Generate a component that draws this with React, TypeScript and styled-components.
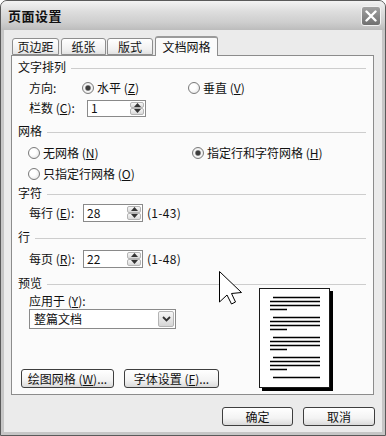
import React from 'react';
import styled, { createGlobalStyle } from 'styled-components';

const GlobalStyle = createGlobalStyle`
  html, body {
    margin: 0;
    padding: 0;
    background: #ffffff;
  }
  body {
    font-family: "Noto Sans CJK SC", "Liberation Sans", sans-serif;
    font-size: 12px;
    color: #111;
  }
`;

const Window = styled.div`
  position: relative;
  width: 386px;
  height: 436px;
  box-sizing: border-box;
  border: 1px solid #5a5a5a;
  border-radius: 7px 7px 0 0;
  display: flex;
  flex-direction: column;
  overflow: hidden;
  background: #c6c6c6;
`;

const TitleBar = styled.div`
  height: 29px;
  flex: none;
  display: flex;
  align-items: center;
  justify-content: space-between;
  padding: 0 4px 0 7px;
  background: linear-gradient(#f3f3f3 0%, #dedede 35%, #cdcdcd 75%, #bcbcbc 100%);
`;

const Title = styled.div`
  font-size: 13px;
  font-weight: 700;
  color: #111;
  letter-spacing: 0.5px;
`;

const CloseButton = styled.div`
  width: 20px;
  height: 20px;
  box-sizing: border-box;
  border: 1px solid #f2f2f2;
  border-radius: 3px;
  background: linear-gradient(#a2a2a2, #707070);
  display: flex;
  align-items: center;
  justify-content: center;
`;

const Frame = styled.div`
  flex: 1;
  display: flex;
  padding: 0 3px 3px;
`;

const Body = styled.div`
  flex: 1;
  display: flex;
  flex-direction: column;
  background: #ebebeb;
  padding: 6px 8px 0 7px;
`;

const TabRow = styled.div`
  height: 19px;
  display: flex;
  align-items: flex-end;
  padding-left: 1px;
`;

const Tab = styled.div<{ $w: number; $ml: number; $active?: boolean }>`
  position: relative;
  z-index: ${(p) => (p.$active ? 2 : 1)};
  box-sizing: border-box;
  width: ${(p) => p.$w}px;
  height: ${(p) => (p.$active ? 20 : 17)}px;
  margin-left: ${(p) => p.$ml}px;
  margin-bottom: ${(p) => (p.$active ? -1 : 0)}px;
  border: 1px solid #8e8e8e;
  border-bottom: ${(p) => (p.$active ? 'none' : '1px solid #8e8e8e')};
  border-top: ${(p) => (p.$active ? '2px solid #9a9a9a' : '1px solid #8e8e8e')};
  border-radius: 3px 3px 0 0;
  background: ${(p) => (p.$active ? '#fbfbfb' : 'linear-gradient(#ffffff, #f0f0f0 70%, #e2e2e2)')};
  display: flex;
  align-items: center;
  justify-content: center;
  font-size: 12px;
  line-height: 1;
`;

const Panel = styled.div`
  position: relative;
  height: 340px;
  box-sizing: border-box;
  border: 1px solid #8c8c8c;
  background: #fbfbfb;
  padding: 0 7px 0 6px;
  display: flex;
  flex-direction: column;
`;

const SectionHeader = styled.div<{ $mt: number; $h: number }>`
  display: flex;
  align-items: center;
  height: ${(p) => p.$h}px;
  margin-top: ${(p) => p.$mt}px;
  line-height: 1;
`;

const SectionRule = styled.div`
  flex: 1;
  height: 1px;
  margin: 2px 0 0 5px;
  background: #cdcdcd;
`;

const Row = styled.div<{ $mt: number; $h: number; $indent: number }>`
  display: flex;
  align-items: center;
  height: ${(p) => p.$h}px;
  margin-top: ${(p) => p.$mt}px;
  padding-left: ${(p) => p.$indent}px;
  line-height: 1;
`;

const FieldLabel = styled.div<{ $w: number }>`
  width: ${(p) => p.$w}px;
  flex: none;
  white-space: nowrap;
`;

const Key = styled.span`
  text-decoration: underline;
`;

const RadioOption = styled.div<{ $w?: number }>`
  display: flex;
  align-items: center;
  gap: 3px;
  width: ${(p) => (p.$w ? `${p.$w}px` : 'auto')};
  flex: none;
  white-space: nowrap;
`;

const RadioCircle = styled.span<{ $checked?: boolean }>`
  width: 12px;
  height: 12px;
  box-sizing: border-box;
  border-radius: 50%;
  border: 1px solid #7a7a7a;
  background: ${(p) =>
    p.$checked
      ? 'radial-gradient(circle, #3c3c3c 0 2px, #8e8e8e 2.6px, #f6f6f6 3.4px, #dedede 100%)'
      : 'radial-gradient(circle at 40% 40%, #ffffff 0 35%, #dcdcdc 100%)'};
  flex: none;
`;

const TextBox = styled.div<{ $w: number; $h: number }>`
  width: ${(p) => p.$w}px;
  height: ${(p) => p.$h}px;
  box-sizing: border-box;
  border: 1px solid #8a8a8a;
  background: #ffffff;
  display: flex;
  align-items: center;
  padding-left: 3px;
  flex: none;
`;

const BoxValue = styled.span`
  flex: 1;
  font-size: 12px;
`;

const SpinButtons = styled.div`
  width: 14px;
  height: calc(100% - 2px);
  margin-right: 1px;
  display: flex;
  flex-direction: column;
`;

const SpinButton = styled.div`
  flex: 1;
  box-sizing: border-box;
  border: 1px solid #b4b4b4;
  border-radius: 2px;
  background: linear-gradient(#f7f7f7, #d9d9d9);
  display: flex;
  align-items: center;
  justify-content: center;
`;

const RangeText = styled.span`
  margin-left: 4px;
  white-space: nowrap;
  letter-spacing: 0.3px;
`;

const PreviewRow = styled.div`
  display: flex;
  align-items: flex-start;
`;

const LeftCol = styled.div`
  width: 241px;
  flex: none;
  display: flex;
  flex-direction: column;
`;

const ApplyLabel = styled.div`
  height: 14px;
  margin-top: 4px;
  padding-left: 11px;
  display: flex;
  align-items: center;
  line-height: 1;
`;

const SelectBox = styled.div`
  width: 147px;
  height: 20px;
  margin: 1px 0 0 11px;
  box-sizing: border-box;
  border: 1px solid #8a8a8a;
  background: #ffffff;
  display: flex;
  align-items: center;
`;

const SelectText = styled.span`
  flex: 1;
  padding-left: 4px;
  font-size: 12px;
  line-height: 1;
`;

const SelectArrow = styled.div`
  width: 16px;
  height: 16px;
  margin-right: 1px;
  box-sizing: border-box;
  border: 1px solid #b4b4b4;
  border-radius: 2px;
  background: linear-gradient(#f7f7f7, #d6d6d6);
  display: flex;
  align-items: center;
  justify-content: center;
`;

const ButtonRow = styled.div<{ $mt: number; $ml: number }>`
  display: flex;
  gap: 10px;
  margin-top: ${(p) => p.$mt}px;
  margin-left: ${(p) => p.$ml}px;
`;

const PushButton = styled.div<{ $w: number }>`
  width: ${(p) => p.$w}px;
  height: 19px;
  box-sizing: border-box;
  border: 1px solid #3e3e3e;
  border-radius: 3px;
  background: linear-gradient(#ffffff, #f3f3f3 60%, #dadada);
  display: flex;
  align-items: center;
  justify-content: center;
  font-size: 12px;
  line-height: 1;
  white-space: nowrap;
`;

const PageBox = styled.div`
  margin-top: -2px;
  flex: none;
`;

const Cursor = styled.svg`
  position: absolute;
  left: 207px;
  top: 215px;
`;

const Footer = styled.div`
  display: flex;
  justify-content: flex-end;
  gap: 10px;
  margin-top: 12px;
  margin-right: -1px;
`;

const RadioItem = ({ label, k, checked, w }: { label: string; k: string; checked?: boolean; w?: number }) => (
  <RadioOption $w={w}>
    <RadioCircle $checked={checked} />
    <span>
      {label} (<Key>{k}</Key>)
    </span>
  </RadioOption>
);

const Arrow = ({ up }: { up?: boolean }) => (
  <svg width="7" height="4" viewBox="0 0 7 4">
    <path d={up ? 'M0 4 L3.5 0 L7 4 Z' : 'M0 0 L3.5 4 L7 0 Z'} fill="#333" />
  </svg>
);

const SpinField = ({ value, w, h }: { value: string; w: number; h: number }) => (
  <TextBox $w={w} $h={h}>
    <BoxValue>{value}</BoxValue>
    <SpinButtons>
      <SpinButton>
        <Arrow up />
      </SpinButton>
      <SpinButton>
        <Arrow />
      </SpinButton>
    </SpinButtons>
  </TextBox>
);

const PagePreview = () => {
  const groups = [9, 29, 49, 69];
  return (
    <svg width="74" height="103" viewBox="0 0 74 103">
      <rect x="3" y="3" width="71" height="100" fill="#000" />
      <rect x="0.5" y="0.5" width="70" height="99" fill="#fff" stroke="#1a1a1a" />
      <g stroke="#000" strokeWidth="1.5">
        {groups.map((g) => (
          <g key={g}>
            <line x1="14" x2="61" y1={g + 0.5} y2={g + 0.5} />
            <line x1="11" x2="61" y1={g + 4.5} y2={g + 4.5} />
            <line x1="11" x2="61" y1={g + 8.5} y2={g + 8.5} />
            <line x1="11" x2="28" y1={g + 12.5} y2={g + 12.5} />
          </g>
        ))}
        <line x1="14" x2="61" y1="89.5" y2="89.5" />
      </g>
    </svg>
  );
};

const App = () => {
  return (
    <>
      <GlobalStyle />
      <Window>
        <TitleBar>
          <Title>页面设置</Title>
          <CloseButton>
            <svg width="12" height="12" viewBox="0 0 12 12">
              <path d="M1.5 1.5 L10.5 10.5 M10.5 1.5 L1.5 10.5" stroke="#fff" strokeWidth="2.4" strokeLinecap="round" />
            </svg>
          </CloseButton>
        </TitleBar>
        <Frame>
          <Body>
            <TabRow>
              <Tab $w={47} $ml={0}>页边距</Tab>
              <Tab $w={45} $ml={2}>纸张</Tab>
              <Tab $w={46} $ml={1}>版式</Tab>
              <Tab $w={63} $ml={2} $active>文档网格</Tab>
            </TabRow>
            <Panel>
              <SectionHeader $mt={3} $h={16}>
                文字排列
                <SectionRule />
              </SectionHeader>
              <Row $mt={4} $h={18} $indent={11}>
                <FieldLabel $w={53}>方向:</FieldLabel>
                <RadioItem label="水平" k="Z" checked w={106} />
                <RadioItem label="垂直" k="V" />
              </Row>
              <Row $mt={2} $h={18} $indent={11}>
                <FieldLabel $w={58}>
                  栏数 (<Key>C</Key>):
                </FieldLabel>
                <SpinField value="1" w={59} h={17} />
              </Row>

              <SectionHeader $mt={6} $h={16}>
                网格
                <SectionRule />
              </SectionHeader>
              <Row $mt={5} $h={18} $indent={10}>
                <RadioItem label="无网格" k="N" w={164} />
                <RadioItem label="指定行和字符网格" k="H" checked />
              </Row>
              <Row $mt={3} $h={18} $indent={10}>
                <RadioItem label="只指定行网格" k="O" />
              </Row>

              <SectionHeader $mt={2} $h={16}>
                字符
                <SectionRule />
              </SectionHeader>
              <Row $mt={2} $h={19} $indent={11}>
                <FieldLabel $w={54}>
                  每行 (<Key>E</Key>):
                </FieldLabel>
                <SpinField value="28" w={60} h={18} />
                <RangeText>(1-43)</RangeText>
              </Row>

              <SectionHeader $mt={7} $h={16}>
                行
                <SectionRule />
              </SectionHeader>
              <Row $mt={4} $h={19} $indent={11}>
                <FieldLabel $w={54}>
                  每页 (<Key>R</Key>):
                </FieldLabel>
                <SpinField value="22" w={60} h={18} />
                <RangeText>(1-48)</RangeText>
              </Row>

              <SectionHeader $mt={8} $h={14}>
                预览
                <SectionRule />
              </SectionHeader>
              <PreviewRow>
                <LeftCol>
                  <ApplyLabel>
                    应用于 (<Key>Y</Key>):
                  </ApplyLabel>
                  <SelectBox>
                    <SelectText>整篇文档</SelectText>
                    <SelectArrow>
                      <svg width="9" height="6" viewBox="0 0 9 6">
                        <path d="M1 1 L4.5 4.5 L8 1" fill="none" stroke="#333" strokeWidth="1.8" />
                      </svg>
                    </SelectArrow>
                  </SelectBox>
                  <ButtonRow $mt={40} $ml={3}>
                    <PushButton $w={93}>
                      绘图网格 (<Key>W</Key>)...
                    </PushButton>
                    <PushButton $w={95}>
                      字体设置 (<Key>F</Key>)...
                    </PushButton>
                  </ButtonRow>
                </LeftCol>
                <PageBox>
                  <PagePreview />
                </PageBox>
              </PreviewRow>

              <Cursor width="24" height="34" viewBox="0 0 24 34">
                <path
                  d="M0.5 0.5 L0.5 31 L8 24 L12.5 33 L16.5 31 L12.5 22.5 L22.5 21.5 Z"
                  fill="#fff"
                  stroke="#000"
                  strokeWidth="1"
                  strokeLinejoin="miter"
                />
              </Cursor>
            </Panel>
            <Footer>
              <PushButton $w={71}>确定</PushButton>
              <PushButton $w={72}>取消</PushButton>
            </Footer>
          </Body>
        </Frame>
      </Window>
    </>
  );
};

export default App;
